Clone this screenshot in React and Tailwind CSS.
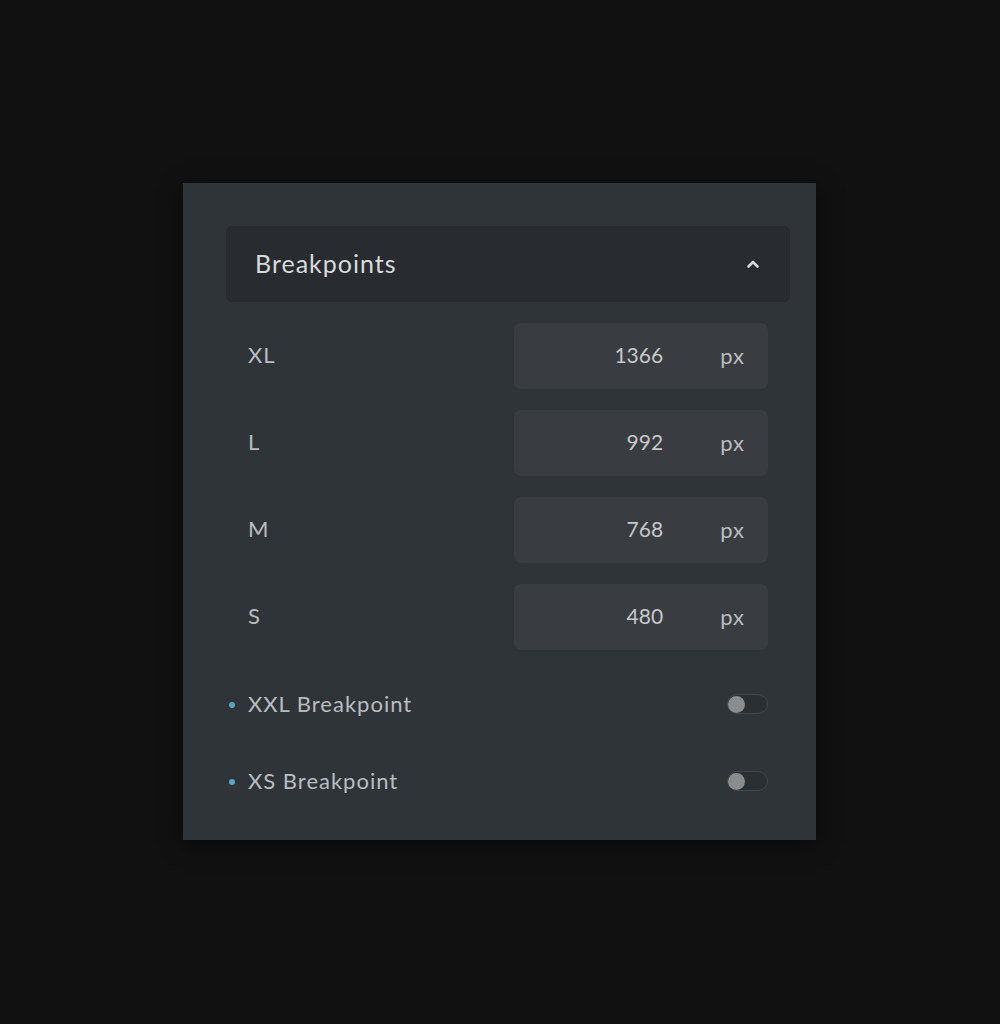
export default function App() {
  const rows = [
    ["XL", "1366"],
    ["L", "992"],
    ["M", "768"],
    ["S", "480"],
  ];
  const toggles = ["XXL Breakpoint", "XS Breakpoint"];
  return (
    <div className="min-h-[1024px] w-full bg-[#111111] pt-[183px] pl-[183px]" style={{ fontFamily: "Lato, 'Noto Sans', sans-serif" }}>
      <div className="w-[633px] h-[657px] bg-[#2e3438] pt-[43px] pl-[43px] pr-[26px] shadow-[0_4px_20px_rgba(0,0,0,0.5)]">
        <div className="h-[76px] rounded-[6px] bg-[#282b2f] flex items-center justify-between pl-[29px] pr-[30px]">
          <span className="text-[25px] text-[#d9dadb] tracking-[1px]">Breakpoints</span>
          <svg width="14" height="10" viewBox="0 0 14 10">
            <path d="M2.5 7.5 L7 3 L11.5 7.5" fill="none" stroke="#d5d7d9" strokeWidth="2.6" strokeLinecap="round" strokeLinejoin="round" />
          </svg>
        </div>
        <div className="px-[22px] mt-[21px] flex flex-col gap-[21px]">
          {rows.map(([label, val]) => (
            <div key={label} className="flex items-center justify-between h-[66px]">
              <span className="text-[22px] text-[#b9bdc1] tracking-[1px] -mt-[3px]">{label}</span>
              <div className="w-[254px] h-[66px] rounded-[7px] bg-[#393c40] flex items-center">
                <span className="flex-1 text-right text-[21px] text-[#c6c8ca] -mt-[3px]">{val}</span>
                <span className="ml-[57px] mr-[23px] text-[22px] text-[#b9bdc1] tracking-[1px] -mt-[2px]">px</span>
              </div>
            </div>
          ))}
        </div>
        <div className="px-[22px] mt-[34px] flex flex-col gap-[37px]">
          {toggles.map((t) => (
            <div key={t} className="relative flex items-center justify-between h-[40px]">
              <span className="absolute left-[-19px] top-[18px] w-[6px] h-[6px] rounded-full bg-[#5aa5c4]" />
              <span className="text-[22px] text-[#b9bdc1] tracking-[1px] -mt-[2px]">{t}</span>
              <div className="w-[41px] h-[20px] rounded-full bg-[#2a2f33] border border-[#41474c] flex items-center">
                <span className="w-[17px] h-[17px] rounded-full bg-[#8b8c8e]" />
              </div>
            </div>
          ))}
        </div>
      </div>
    </div>
  );
}
